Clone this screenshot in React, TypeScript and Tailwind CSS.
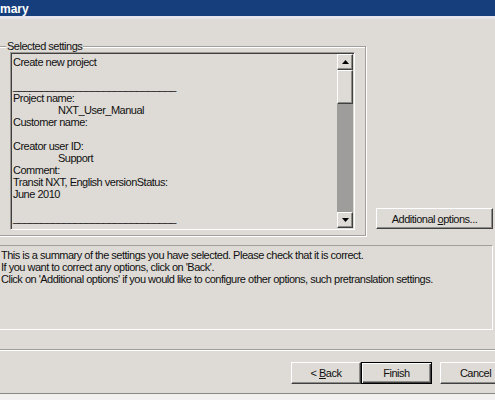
const raised =
  "border border-t-white border-l-white border-r-[#404040] border-b-[#404040] shadow-[inset_-1px_-1px_0_#8e8c88]";

const Arrow = ({ up }: { up?: boolean }) => (
  <svg width="7" height="4" viewBox="0 0 7 4">
    <path d={up ? "M3.5 0 L7 4 L0 4 Z" : "M0 0 L7 0 L3.5 4 Z"} fill="#000" />
  </svg>
);

const rule = "_".repeat(29);

const lines: { t: string; indent?: boolean }[] = [
  { t: "Create new project" },
  { t: "" },
  { t: rule },
  { t: "Project name:" },
  { t: "NXT_User_Manual", indent: true },
  { t: "Customer name:" },
  { t: "" },
  { t: "Creator user ID:" },
  { t: "Support", indent: true },
  { t: "Comment:" },
  { t: "Transit NXT, English versionStatus:" },
  { t: "June 2010" },
  { t: "" },
  { t: rule },
];

const App = () => {
  return (
    <div className="h-[400px] w-[495px] overflow-hidden bg-[#dedbd6] font-['Liberation_Sans',Arial,sans-serif] text-[11px] leading-[12px] tracking-[-0.5px] text-[#101010]">
      {/* title bar */}
      <div className="flex h-[16px] items-center bg-[#173e7c] pt-[1px] text-[12px] font-bold tracking-normal text-white">
        <span>mary</span>
      </div>
      <div className="h-[3px] bg-[#e7e4ec]" />

      {/* settings group + additional options */}
      <div className="mt-[27px] flex items-end">
        <div className="relative -ml-[4px] h-[190px] w-[370px] shrink-0 border border-[#a3a09b] pl-[13px] pt-[5px] shadow-[inset_1px_1px_0_#fff,1px_1px_0_#fff]">
          <span className="absolute left-[9px] top-[-7px] bg-[#dedbd6] px-[1px]">Selected settings</span>

          {/* read-only list box */}
          <div className="flex h-[178px] w-[345px] border border-t-[#9a9894] border-l-[#9a9894] border-r-white border-b-white shadow-[inset_1px_1px_0_#404040]">
            <div className="flex-1 pl-[2px] pt-[3px]">
              {lines.map((line, i) => (
                <div key={i} className={`h-[12px] whitespace-pre ${line.indent ? "pl-[45px]" : ""}`}>
                  {line.t}
                </div>
              ))}
            </div>
            <div className="my-[1px] mr-[1px] flex w-[16px] flex-col">
              <div className={`flex h-[16px] items-center justify-center bg-[#dedbd6] ${raised}`}>
                <Arrow up />
              </div>
              <div className={`h-[34px] bg-[#dedbd6] ${raised}`} />
              <div className="flex-1 bg-[#9e9d9b]" />
              <div className={`flex h-[16px] items-center justify-center bg-[#dedbd6] ${raised}`}>
                <Arrow />
              </div>
            </div>
          </div>
        </div>

        <button className={`mb-[7px] ml-[10px] h-[21px] w-[117px] bg-[#dedbd6] text-center ${raised}`}>
          Additional <span className="underline">o</span>ptions...
        </button>
      </div>

      {/* description */}
      <div className="-ml-[3px] mt-[9px] h-[85px] w-[496px] border border-t-[#a09e9a] border-l-[#a09e9a] border-r-white border-b-white pl-[3px] pt-[3px]">
        <div>This is a summary of the settings you have selected. Please check that it is correct.</div>
        <div>If you want to correct any options, click on 'Back'.</div>
        <div>Click on 'Additional options' if you would like to configure other options, such pretranslation settings.</div>
      </div>

      {/* separator */}
      <div className="mt-[19px] h-[1px] bg-[#a09e9a]" />
      <div className="h-[1px] bg-white" />

      {/* buttons */}
      <div className="mt-[11px] flex pl-[291px]">
        <button className={`h-[22px] w-[70px] shrink-0 bg-[#dedbd6] ${raised}`}>
          &lt; <span className="underline">B</span>ack
        </button>
        <button className="h-[22px] w-[71px] shrink-0 border border-black bg-[#dedbd6] shadow-[inset_1px_1px_0_#fff,inset_-1px_-1px_0_#404040,inset_-2px_-2px_0_#8e8c88]">
          Finish
        </button>
        <button className={`ml-[8px] h-[22px] w-[71px] shrink-0 bg-[#dedbd6] ${raised}`}>Cancel</button>
      </div>

      {/* window bottom edge */}
      <div className="mt-[9px] h-[1px] bg-[#8a8884]" />
      <div className="h-[6px] bg-[#f2f1ef]" />
    </div>
  );
};

export default App;
